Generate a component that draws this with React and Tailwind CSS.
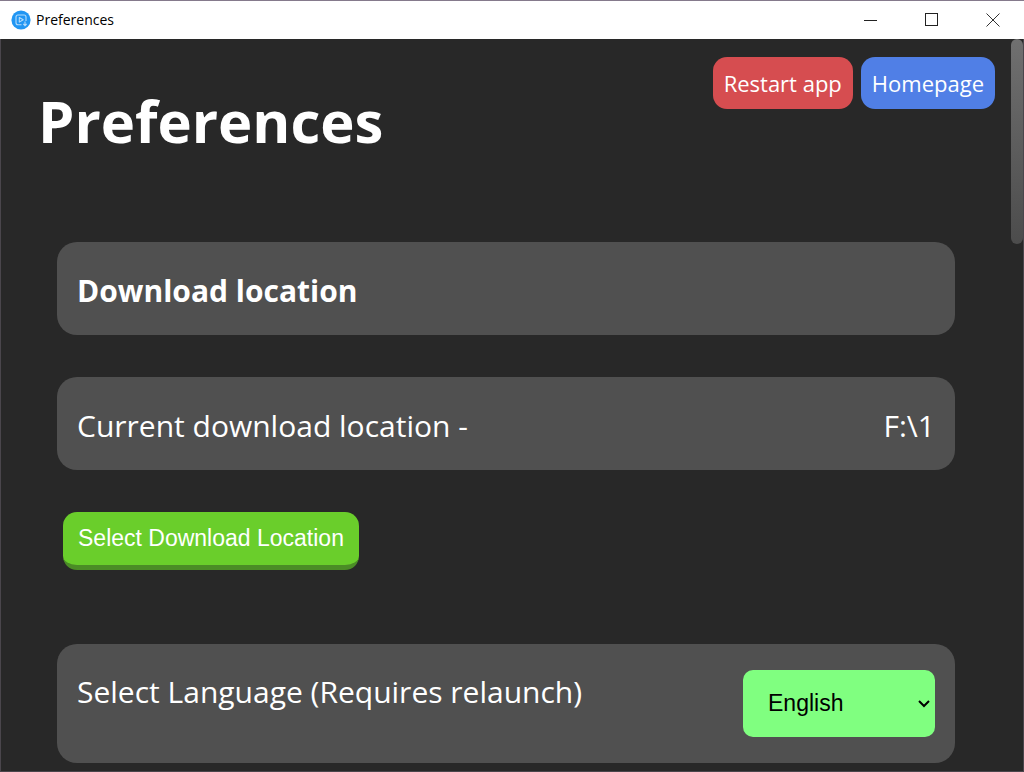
import { useState } from 'react'

const languages = ['English', 'Deutsch', 'Español', 'Français', 'Italiano']

const AppIcon = () => (
  <svg width="20" height="20" viewBox="0 0 20 20" fill="none" aria-hidden="true">
    <circle cx="10" cy="10" r="9.6" fill="#2196f3" />
    <path
      d="M10.500 14.700H7A2 2 0 0 1 5 12.700V7A2 2 0 0 1 7 5h6A2 2 0 0 1 15 7v4"
      stroke="#b5dcfb"
      strokeWidth="1.1"
    />
    <path d="M8.300 7.500v4.600l3.900-2.300z" stroke="#b5dcfb" strokeWidth="1.1" strokeLinejoin="round" />
    <path d="M14 11.500v4M12.300 13.900l1.700 1.700 1.700-1.700" stroke="#b5dcfb" strokeWidth="1.1" />
  </svg>
)

const TitleBar = () => (
  <header className="flex h-[39px] shrink-0 items-center justify-between border-t border-[#857a8c] bg-white px-px text-black">
    <div className="flex items-center gap-[5px] pl-[10px]">
      <AppIcon />
      <span className="text-[14px] leading-5">Preferences</span>
    </div>
    <div className="flex h-full">
      <button type="button" aria-label="Minimize" className="flex w-[61px] items-center justify-center">
        <svg width="14" height="14" stroke="#222">
          <path d="M0 7.500h13" />
        </svg>
      </button>
      <button type="button" aria-label="Maximize" className="flex w-[61px] items-center justify-center">
        <svg width="14" height="14" fill="none" stroke="#222">
          <rect x="0.500" y="0.500" width="12" height="12" />
        </svg>
      </button>
      <button type="button" aria-label="Close" className="flex w-[61px] items-center justify-center">
        <svg width="14" height="14" stroke="#333">
          <path d="M0.500 0.500l13 13M13.500 0.500l-13 13" />
        </svg>
      </button>
    </div>
  </header>
)

const App = () => {
  const [language, setLanguage] = useState('English')

  return (
    <div className="flex h-screen flex-col overflow-hidden bg-[#282828] font-['Open_Sans','Noto_Sans',sans-serif] text-white">
      <TitleBar />
      <div className="relative min-h-0 flex-1 border-x border-b border-[#4a464c]">
        <main className="h-full overflow-hidden pr-[68px] pl-[38px]">
          <div className="-mr-10 flex justify-end gap-2 pt-[18px]">
            <button type="button" className="h-[52px] rounded-[14px] bg-[#d64d50] px-[11px] pt-px text-[22px]">
              Restart app
            </button>
            <a href="#home" className="flex h-[52px] items-center rounded-[14px] bg-[#507fe6] px-[11px] pt-px text-[22px]">
              Homepage
            </a>
          </div>

          <h1 className="-mt-6 -ml-px text-[58px] leading-[72px] font-bold">Preferences</h1>

          <div className="mt-[85px] flex flex-col gap-[42px] pl-[18px]">
            <section className="flex h-[93px] items-center rounded-[20px] bg-[#505050] px-5 pt-1">
              <h2 className="text-[30px] leading-10 font-bold">Download location</h2>
            </section>

            <section className="flex h-[93px] items-center justify-between rounded-[20px] bg-[#505050] px-5 pt-1 text-[30px] leading-10">
              <span>Current download location -</span>
              <span>F:\1</span>
            </section>

            <button
              type="button"
              className="ml-[6px] h-[58px] self-start rounded-[14px] border-b-[5px] border-[#4b8c26] bg-[#6ace2b] px-[15px] font-['Liberation_Sans',sans-serif] text-[23px]"
            >
              Select Download Location
            </button>

            <section className="mt-8 flex items-center justify-between rounded-[20px] bg-[#505050] px-5 py-[26px]">
              <label htmlFor="language" className="mb-6 text-[30px] leading-10">
                Select Language (Requires relaunch)
              </label>
              <div className="relative">
                <select
                  id="language"
                  value={language}
                  onChange={(e) => setLanguage(e.target.value)}
                  className="h-[67px] w-48 appearance-none rounded-[10px] bg-[#80ff80] pl-[25px] font-['Liberation_Sans',sans-serif] text-[23px] text-black"
                >
                  {languages.map((name) => (
                    <option key={name}>{name}</option>
                  ))}
                </select>
                <svg
                  width="12"
                  height="8"
                  fill="none"
                  stroke="#000"
                  strokeWidth="2"
                  aria-hidden="true"
                  className="pointer-events-none absolute top-[30px] right-[5px]"
                >
                  <path d="M1 1l5 5 5-5" />
                </svg>
              </div>
            </section>
          </div>
        </main>
        <div className="absolute top-0 right-0 h-[205px] w-3 rounded-full bg-linear-to-b from-[#707070] to-[#4c4c4c]" />
      </div>
    </div>
  )
}

export default App
